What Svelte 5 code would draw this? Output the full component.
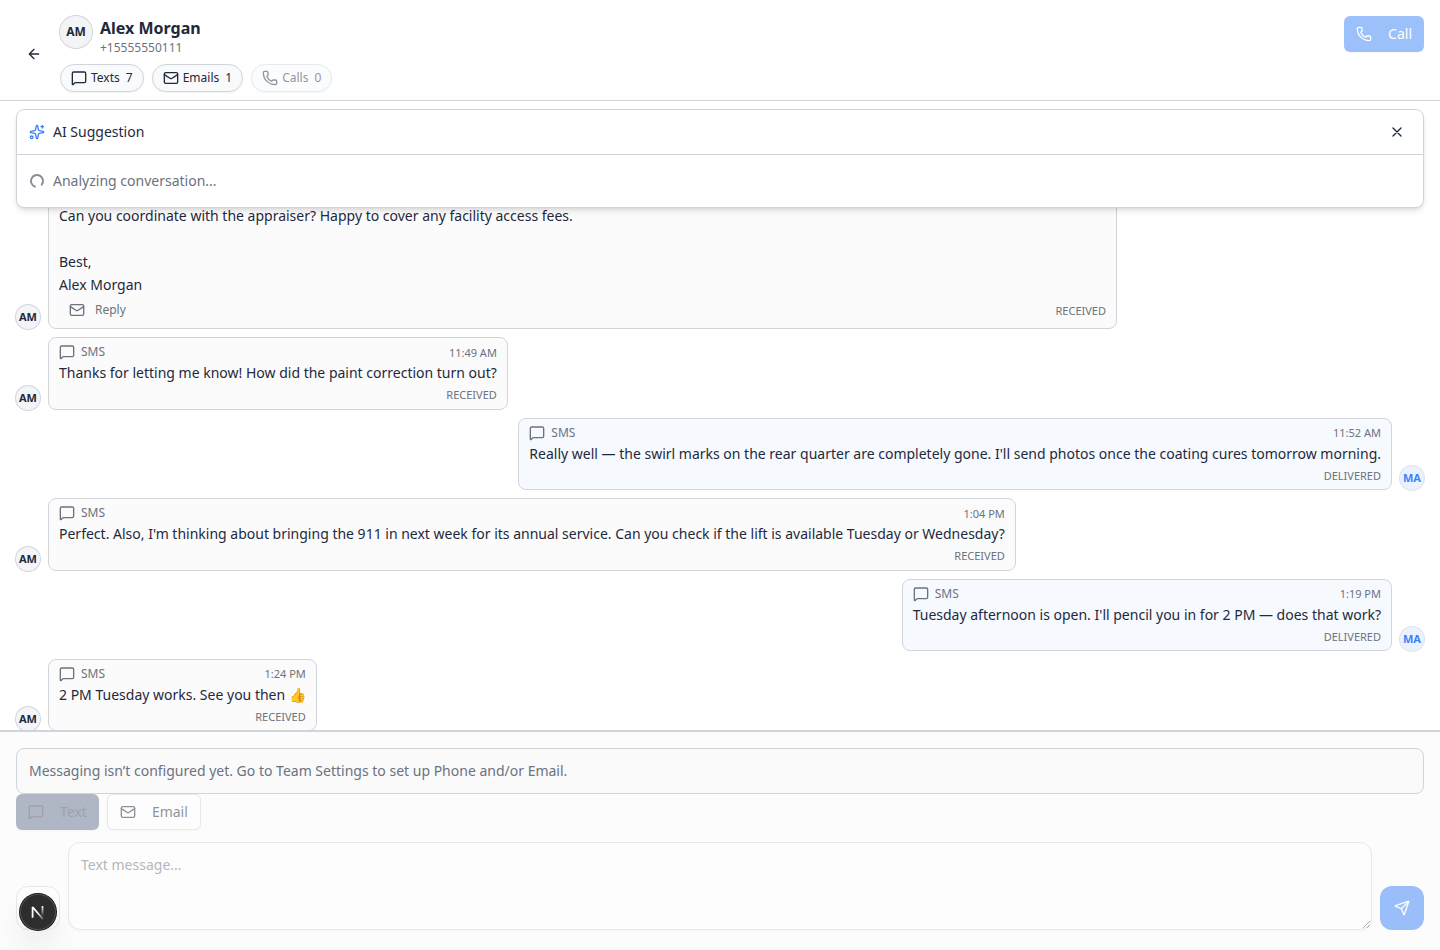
<script lang="ts">
  type Message = { from: 'AM' | 'MA'; time: string; text: string; status: string };

  const messages: Message[] = [
    { from: 'AM', time: '11:49 AM', text: 'Thanks for letting me know! How did the paint correction turn out?', status: 'Received' },
    { from: 'MA', time: '11:52 AM', text: "Really well — the swirl marks on the rear quarter are completely gone. I'll send photos once the coating cures tomorrow morning.", status: 'Delivered' },
    { from: 'AM', time: '1:04 PM', text: "Perfect. Also, I'm thinking about bringing the 911 in next week for its annual service. Can you check if the lift is available Tuesday or Wednesday?", status: 'Received' },
    { from: 'MA', time: '1:19 PM', text: "Tuesday afternoon is open. I'll pencil you in for 2 PM — does that work?", status: 'Delivered' },
    { from: 'AM', time: '1:24 PM', text: '2 PM Tuesday works. See you then 👍', status: 'Received' }
  ];
</script>

{#snippet icon(name: string)}
  <svg class="icon" viewBox="0 0 24 24" fill="none" stroke="currentColor" stroke-width="2" stroke-linecap="round" stroke-linejoin="round" aria-hidden="true">
    {#if name === 'message'}
      <path d="M22 17a2 2 0 0 1-2 2H6.828a2 2 0 0 0-1.414.586l-2.202 2.202A.71.71 0 0 1 2 21.286V5a2 2 0 0 1 2-2h16a2 2 0 0 1 2 2z" />
    {:else if name === 'mail'}
      <rect width="20" height="16" x="2" y="4" rx="2" />
      <path d="m22 7-8.991 5.727a2 2 0 0 1-2.009 0L2 7" />
    {:else if name === 'phone'}
      <path d="M13.832 16.568a1 1 0 0 0 1.213-.303l.355-.465A2 2 0 0 1 17 15h3a2 2 0 0 1 2 2v3a2 2 0 0 1-2 2A18 18 0 0 1 2 4a2 2 0 0 1 2-2h3a2 2 0 0 1 2 2v3a2 2 0 0 1-.8 1.6l-.468.351a1 1 0 0 0-.292 1.233 14 14 0 0 0 6.392 6.384" />
    {:else if name === 'back'}
      <path d="m12 19-7-7 7-7M19 12H5" />
    {:else if name === 'close'}
      <path d="M18 6 6 18M6 6l12 12" />
    {:else if name === 'sparkles'}
      <path d="M11.017 2.814a1 1 0 0 1 1.966 0l1.051 5.558a2 2 0 0 0 1.594 1.594l5.558 1.051a1 1 0 0 1 0 1.966l-5.558 1.051a2 2 0 0 0-1.594 1.594l-1.051 5.558a1 1 0 0 1-1.966 0l-1.051-5.558a2 2 0 0 0-1.594-1.594l-5.558-1.051a1 1 0 0 1 0-1.966l5.558-1.051a2 2 0 0 0 1.594-1.594z" />
      <path d="M20 2v4M22 4h-4" />
      <circle cx="4" cy="20" r="2" />
    {:else if name === 'send'}
      <path d="M14.536 21.686a.5.5 0 0 0 .937-.024l6.5-19a.496.496 0 0 0-.635-.635l-19 6.5a.5.5 0 0 0-.024.937l7.93 3.18a2 2 0 0 1 1.112 1.11z" />
      <path d="m21.854 2.147-10.94 10.939" />
    {/if}
  </svg>
{/snippet}

<div class="page">
  <header>
    <button class="back" aria-label="Back">{@render icon('back')}</button>
    <div class="contact">
      <div class="person">
        <span class="avatar large">AM</span>
        <div>
          <h1>Alex Morgan</h1>
          <p>+15555550111</p>
        </div>
      </div>
      <div class="pills">
        <span class="pill">{@render icon('message')}<span>Texts</span><span class="count">7</span></span>
        <span class="pill">{@render icon('mail')}<span>Emails</span><span class="count">1</span></span>
        <span class="pill off">{@render icon('phone')}<span>Calls</span><span class="count">0</span></span>
      </div>
    </div>
    <button class="call" disabled>{@render icon('phone')}Call</button>
  </header>

  <main>
    <section class="suggestion">
      <div class="suggestion-head">
        <span class="spark">{@render icon('sparkles')}</span>
        <span>AI Suggestion</span>
        <button aria-label="Close">{@render icon('close')}</button>
      </div>
      <div class="suggestion-body">
        <svg class="icon spinner" viewBox="0 0 24 24" fill="none" stroke="currentColor" stroke-width="2.9" stroke-linecap="round" aria-hidden="true">
          <path d="M21 12a9 9 0 1 1-6.219-8.56" />
        </svg>
        <span>Analyzing conversation...</span>
      </div>
    </section>

    <div class="thread">
      <div class="row">
        <span class="avatar">AM</span>
        <article class="bubble email">
          <div class="text">Can you coordinate with the appraiser? Happy to cover any facility access fees.<br /><br />Best,<br />Alex Morgan</div>
          <footer class="email-foot">
            <button class="reply">{@render icon('mail')}Reply</button>
            <span class="status">Received</span>
          </footer>
        </article>
      </div>
      {#each messages as m}
        <div class="row" class:mine={m.from === 'MA'}>
          <span class="avatar">{m.from}</span>
          <article class="bubble">
            <div class="meta">{@render icon('message')}<span>SMS</span><time>{m.time}</time></div>
            <div class="text">{m.text}</div>
            <div class="status">{m.status}</div>
          </article>
        </div>
      {/each}
    </div>
  </main>

  <section class="composer">
    <div class="notice">Messaging isn’t configured yet. Go to Team Settings to set up Phone and/or Email.</div>
    <div class="modes">
      <button class="mode active" disabled>{@render icon('message')}Text</button>
      <button class="mode" disabled>{@render icon('mail')}Email</button>
    </div>
    <div class="entry">
      <button class="attach" aria-label="Attach" disabled></button>
      <textarea placeholder="Text message..." disabled></textarea>
      <button class="send" aria-label="Send" disabled>{@render icon('send')}</button>
    </div>
  </section>

  <div class="dev-badge">
    <svg viewBox="0 0 40 40" fill="none" aria-hidden="true">
      <defs>
        <linearGradient id="stem" x1="0" y1="13" x2="0" y2="25" gradientUnits="userSpaceOnUse">
          <stop stop-color="#fff" /><stop offset="1" stop-color="#fff" stop-opacity="0" />
        </linearGradient>
        <linearGradient id="diag" x1="20" y1="20" x2="27" y2="28" gradientUnits="userSpaceOnUse">
          <stop stop-color="#fff" /><stop offset="1" stop-color="#fff" stop-opacity="0.2" />
        </linearGradient>
      </defs>
      <path d="M14 26.5V14.4L25.4 27.8" stroke="url(#diag)" stroke-width="2" stroke-linejoin="bevel" />
      <path d="M25 13.4V24.5" stroke="url(#stem)" stroke-width="2" />
    </svg>
  </div>
</div>

<style>
  :global(body) { margin: 0; background: #fff; overflow: hidden; }
  :global(*) { box-sizing: border-box; }
  .page {
    height: 950px;
    display: flex;
    flex-direction: column;
    position: relative;
    overflow: hidden;
    color: #1f293b;
    font: 400 14px/20px 'Noto Sans', sans-serif;
  }
  button { font: inherit; color: inherit; border: 0; background: none; padding: 0; margin: 0; display: flex; align-items: center; }
  h1, p { margin: 0; }
  .icon { width: 16px; height: 16px; flex: none; display: block; }

  header { height: 101px; flex: none; display: flex; align-items: flex-start; gap: 8px; padding: 16px 16px 8px; border-bottom: 1px solid #d1d5db; }
  .back { width: 36px; height: 36px; justify-content: center; align-self: center; }
  .contact { flex: 1; }
  .person { display: flex; gap: 8px; height: 40px; }
  h1 { font-size: 16px; line-height: 24px; font-weight: 700; }
  p { font-size: 12px; line-height: 16px; color: #6b7280; }
  .avatar {
    width: 24px; height: 24px; flex: none; border-radius: 50%;
    display: flex; align-items: center; justify-content: center;
    background: #f3f4f6; box-shadow: 0 0 0 1px #d1d5db;
    font-size: 11px; line-height: 16px; font-weight: 700;
  }
  .avatar.large { width: 32px; height: 32px; font-size: 12px; }
  .pills { display: flex; gap: 8px; margin-top: 8px; }
  .pill { height: 28px; display: flex; align-items: center; gap: 4px; padding: 0 10px; border: 1px solid #d1d5db; border-radius: 14px; background: #f9fafc; font-size: 12px; line-height: 16px; box-shadow: 0 1px 2px rgb(0 0 0 / 0.05); }
  .pill.off { opacity: 0.5; }
  .count { margin-left: 2px; }
  .call { height: 36px; padding: 0 12px; gap: 16px; border-radius: 6px; background: #3b82f6; color: #fff; opacity: 0.5; box-shadow: 0 1px 2px rgb(0 0 0 / 0.05); }

  main { flex: 1; min-height: 0; position: relative; overflow: hidden; display: flex; flex-direction: column; justify-content: flex-end; }
  .suggestion { position: absolute; z-index: 1; top: 8px; left: 16px; right: 16px; border: 1px solid #d1d5db; border-radius: 8px; background: #fff; box-shadow: 0 4px 6px -1px rgb(0 0 0 / 0.1), 0 2px 4px -2px rgb(0 0 0 / 0.1); }
  .suggestion-head { display: flex; align-items: center; gap: 8px; padding: 8px 12px; border-bottom: 1px solid #d1d5db; }
  .suggestion-head button { width: 28px; height: 28px; justify-content: center; margin-left: auto; }
  .spark { color: #3b82f6; }
  .suggestion-body { display: flex; align-items: center; gap: 8px; padding: 16px 12px; color: #6b7280; }
  .spinner { transform: rotate(110deg); opacity: 0.8; }

  .thread { display: flex; flex-direction: column; gap: 8px; padding: 0 16px; margin-bottom: -1.25px; }
  .row { display: flex; align-items: flex-end; gap: 8px; }
  .row:last-child { margin-top: -0.25px; }
  .row:last-child time { padding-top: 1px; }
  .row.mine { flex-direction: row-reverse; }
  .mine .avatar { background: #ebf2fe; color: #3b82f6; box-shadow: 0 0 0 1px #dbe4f5; }
  .bubble { border: 1px solid #d1d5db; border-radius: 8px; background: #fbfbfb; padding: 6px 10px; }
  .mine .bubble { background: #f6faff; }
  .bubble.email { width: 1069px; padding-bottom: 4px; }
  .text { line-height: 22.75px; white-space: nowrap; }
  .meta { display: flex; align-items: center; gap: 6px; height: 16px; margin-bottom: 2px; font-size: 12px; line-height: 16px; color: #6b7280; }
  .meta time { margin-left: auto; font-size: 11px; padding-top: 1.5px; }
  .status { margin-top: 2.25px; font-size: 11px; line-height: 15.5px; text-align: right; text-transform: uppercase; color: #6b7280; }
  .email-foot { display: flex; align-items: center; justify-content: space-between; height: 27.75px; }
  .email-foot .status { margin-top: 1px; }
  .reply { height: 28px; padding: 0 10px; gap: 10px; font-size: 12px; color: #6b7280; }

  .composer { height: 220px; flex: none; padding: 16px 16px 0; border-top: 2px solid #d1d5db; background: #fcfcfd; }
  .notice { height: 46px; padding: 12px; border: 1px solid #d1d5db; border-radius: 8px; background: #fafafa; color: #6b7280; }
  .modes { display: flex; gap: 8px; }
  .mode { height: 36px; padding: 0 12px; gap: 16px; border: 1px solid #d1d5db; border-radius: 6px; background: #fff; opacity: 0.5; box-shadow: 0 1px 2px rgb(0 0 0 / 0.05); }
  .mode.active { background: #64738e; border: 0; color: #424b5a; }
  .entry { display: flex; align-items: flex-end; gap: 8px; margin-top: 12px; }
  .attach, .send { width: 44px; height: 44px; flex: none; border-radius: 12px; justify-content: center; opacity: 0.5; }
  .attach { border: 1px solid #d1d5db; background: #fff; }
  .send { background: #3b82f6; color: #fff; }
  textarea { flex: 1; height: 88px; margin: 0; padding: 12px; border: 1px solid #d1d5db; border-radius: 12px; background: #fff; opacity: 0.5; font: inherit; resize: vertical; box-shadow: 0 1px 2px rgb(0 0 0 / 0.05); }
  textarea::placeholder { color: #6b7280; }

  .dev-badge { position: absolute; left: 20px; bottom: 20px; width: 36px; height: 36px; border-radius: 50%; background: #2d2d2d; box-shadow: 0 0 0 1px #171717, inset 0 0 0 1px #505050, 0 16px 32px -8px rgb(0 0 0 / 0.24); }
  .dev-badge svg { display: block; width: 36px; height: 36px; }
</style>
